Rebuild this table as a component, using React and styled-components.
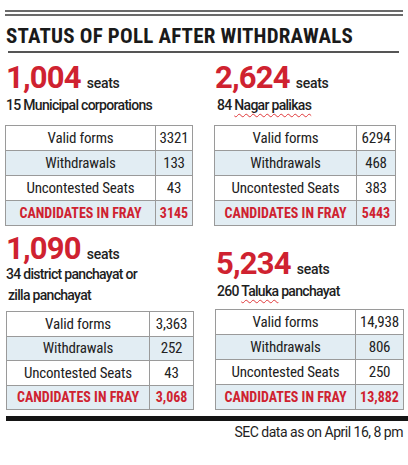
import React from "react";
import styled, { createGlobalStyle } from "styled-components";

const Global = createGlobalStyle`
  html, body { margin: 0; padding: 0; background: #fff; }
  body { font-family: "Liberation Sans Narrow", "Roboto Condensed", Roboto, sans-serif; color: #1d1d1d; }
`;

const RED = "#cf2230";

const Page = styled.div`
  width: 408px;
  height: 465px;
  padding: 10px 4px 0 5px;
  box-sizing: border-box;
  overflow: hidden;
`;

const DoubleRule = styled.div`
  height: 2px;
  border-top: 2px solid #6a6a6a;
  border-bottom: 2px solid #6a6a6a;
  margin-right: 1px;
`;

const Title = styled.h1`
  margin: 0;
  padding: 9px 0 0 1px;
  font-family: "Liberation Sans Narrow", "Roboto Condensed", Roboto, sans-serif;
  font-weight: 700;
  font-size: 21px;
  line-height: 22px;
  color: #1a1a1a;
  letter-spacing: 0.2px;
`;

const TitleRule = styled.div`
  height: 2px;
  background: #555;
  margin: 4px 5px 0 3px;
`;

const Grid = styled.div`
  display: grid;
  grid-template-columns: 189px 190px;
  column-gap: 20px;
  grid-template-rows: 173px auto;
`;

const Cell = styled.div`
  display: flex;
  flex-direction: column;
  padding-top: ${(p) => p.$top}px;
`;

const NumberRow = styled.div`
  display: flex;
  align-items: baseline;
  gap: 6px;
  padding-left: ${(p) => p.$shift || 0}px;
  height: 28px;
  line-height: 28px;
`;

const Big = styled.span`
  font-family: Roboto, "Liberation Sans", sans-serif;
  font-weight: 700;
  font-size: 31px;
  letter-spacing: -0.8px;
  color: ${RED};
`;

const Seats = styled.span`
  font-family: Roboto, sans-serif;
  font-weight: 500;
  font-size: 14px;
  letter-spacing: -0.3px;
  color: #222;
`;

const Sub = styled.div`
  font-family: Roboto, sans-serif;
  font-weight: 500;
  font-size: 14px;
  line-height: 21px;
  letter-spacing: -0.7px;
  color: #1e1e1e;
  padding-left: ${(p) => p.$shift || 0}px;
  margin-top: ${(p) => p.$mt}px;
  margin-bottom: ${(p) => p.$mb}px;
`;

const Line = styled.span`
  display: block;
  padding-left: ${(p) => p.$indent || 0}px;
`;

const Squiggle = styled.span`
  text-decoration: underline wavy #e0383a;
  text-decoration-thickness: 1px;
  text-underline-offset: 3px;
`;

const Table = styled.table`
  border-collapse: collapse;
  width: ${(p) => p.$width}px;
  margin-left: ${(p) => p.$offset || 0}px;
  table-layout: fixed;
`;

const Row = styled.tr`
  background: ${(p) => (p.$shade ? "#e2edf3" : "#fff")};
  height: ${(p) => p.$h}px;
`;

const Label = styled.td`
  border: 1px solid #9a9a9a;
  text-align: center;
  padding: 0;
  font-size: ${(p) => (p.$total ? 14 : 15)}px;
  letter-spacing: ${(p) => (p.$total ? "0" : "-0.2px")};
  color: ${(p) => (p.$total ? RED : "#222")};
  font-weight: ${(p) => (p.$total ? 700 : 400)};
`;

const Value = styled(Label)`
  width: ${(p) => p.$w}px;
`;

const Footer = styled.div`
  height: 5px;
  background: #151515;
  margin: 6px -4px 0 1px;
`;

const Note = styled.div`
  text-align: right;
  font-family: Roboto, sans-serif;
  font-size: 14px;
  line-height: 16px;
  letter-spacing: -0.5px;
  padding: 3px 1px 0 0;
  color: #1e1e1e;
`;

function Stats({ width, valueW, offset, rowH, data }) {
  const rows = [
    ["Valid forms", data[0]],
    ["Withdrawals", data[1]],
    ["Uncontested Seats", data[2]],
  ];
  return (
    <Table $width={width} $offset={offset}>
      <tbody>
        {rows.map(([l, v], i) => (
          <Row key={l} $shade={i === 1} $h={rowH}>
            <Label>{l}</Label>
            <Value $w={valueW}>{v}</Value>
          </Row>
        ))}
        <Row $shade $h={rowH}>
          <Label $total>CANDIDATES IN FRAY</Label>
          <Value $w={valueW} $total>
            {data[3]}
          </Value>
        </Row>
      </tbody>
    </Table>
  );
}

export default function App() {
  return (
    <Page>
      <Global />
      <DoubleRule />
      <Title>STATUS OF POLL AFTER WITHDRAWALS</Title>
      <TitleRule />
      <Grid>
        <Cell $top={11}>
          <NumberRow $shift={1}>
            <Big>1,004</Big>
            <Seats>seats</Seats>
          </NumberRow>
          <Sub $shift={1} $mt={3} $mb={9}>15 Municipal corporations</Sub>
          <Stats width={188} valueW={36} rowH={25} data={["3321", "133", "43", "3145"]} />
        </Cell>
        <Cell $top={11}>
          <NumberRow $shift={1}>
            <Big>2,624</Big>
            <Seats>seats</Seats>
          </NumberRow>
          <Sub $shift={3} $mt={3} $mb={9}>
            84 <Squiggle>Nagar palikas</Squiggle>
          </Sub>
          <Stats width={182} valueW={38} rowH={25} data={["6294", "468", "383", "5443"]} />
        </Cell>
        <Cell $top={9}>
          <NumberRow $shift={1}>
            <Big>1,090</Big>
            <Seats>seats</Seats>
          </NumberRow>
          <Sub $shift={1} $mt={1} $mb={5}>
            <Line>34 district panchayat or</Line>
            <Line $indent={2}>zilla panchayat</Line>
          </Sub>
          <Stats width={188} offset={1} valueW={43} rowH={24.5} data={["3,363", "252", "43", "3,068"]} />
        </Cell>
        <Cell $top={24}>
          <NumberRow $shift={2}>
            <Big>5,234</Big>
            <Seats>seats</Seats>
          </NumberRow>
          <Sub $shift={3} $mt={3} $mb={7}>
            260 <Squiggle>Taluka</Squiggle> panchayat
          </Sub>
          <Stats width={189} offset={1} valueW={47} rowH={25} data={["14,938", "806", "250", "13,882"]} />
        </Cell>
      </Grid>
      <Footer />
      <Note>SEC data as on April 16, 8 pm</Note>
    </Page>
  );
}
